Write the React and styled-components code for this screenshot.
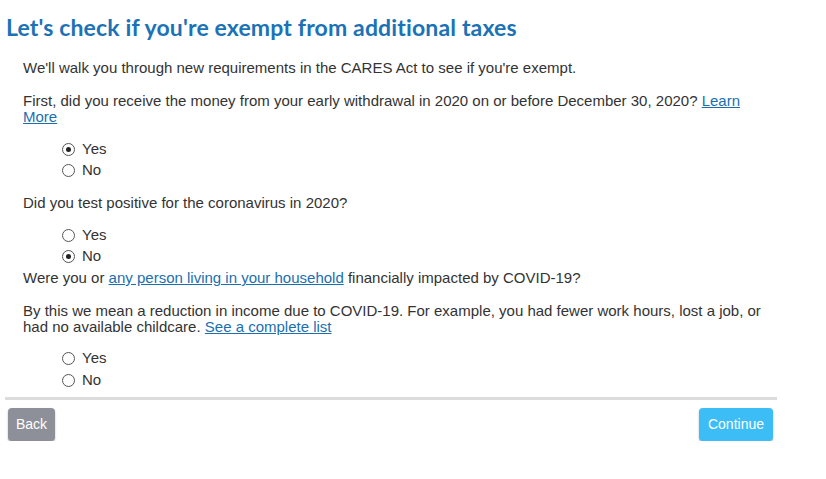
import React from "react";
import styled, { createGlobalStyle } from "styled-components";

const Global = createGlobalStyle`
  html, body { margin: 0; padding: 0; background: #fff; }
  body { font-family: "Liberation Sans", Arial, sans-serif; }
`;

const Page = styled.div`
  width: 772px;
  padding: 14px 0 0 5px;
`;

const Title = styled.h1`
  margin: 0 0 0 1px;
  font-family: Lato, "Open Sans", sans-serif;
  font-weight: 700;
  font-size: 23px;
  line-height: 27px;
  color: #1b72b6;
  letter-spacing: 0.15px;
`;

const Body = styled.div`
  padding: 19px 10px 0 18px;
  font-size: 15px;
  line-height: 16.5px;
  color: #333;
`;

const Para = styled.p`
  margin: 0 0 ${(p) => p.$mb ?? 16}px;
`;

const Link = styled.a`
  color: #1a6fb0;
  text-decoration: underline;
  cursor: pointer;
`;

const Group = styled.div`
  display: flex;
  flex-direction: column;
  padding-left: 39px;
  margin: ${(p) => p.$mt ?? 12}px 0 ${(p) => p.$mb ?? 14}px;
`;

const Row = styled.label`
  display: flex;
  align-items: center;
  height: ${(p) => p.$h ?? 21}px;
  gap: 7px;
`;

const Circle = styled.span`
  width: 11px;
  height: 11px;
  border: 1px solid #555;
  border-radius: 50%;
  display: flex;
  align-items: center;
  justify-content: center;
  box-sizing: content-box;
  background: #fff;
  &::after {
    content: "";
    width: 5px;
    height: 5px;
    border-radius: 50%;
    background: ${(p) => (p.$on ? "#222" : "transparent")};
  }
`;

const Divider = styled.hr`
  margin: 5px 0 0;
  border: 0;
  height: 3px;
  background: #dcdcdc;
`;

const Footer = styled.div`
  display: flex;
  justify-content: space-between;
  padding: 8px 4px 0 3px;
`;

const Button = styled.button`
  height: 33px;
  padding: 0 ${(p) => (p.$primary ? 9 : 8)}px;
  border: 0;
  border-radius: 4px;
  font-family: "Liberation Sans", Arial, sans-serif;
  font-size: 14px;
  color: #fff;
  background: ${(p) => (p.$primary ? "#3dbdf6" : "#8e9099")};
  box-shadow: 0 1px 2px rgba(0, 0, 0, 0.3);
  cursor: pointer;
`;

const Radio = ({ label, on, h }) => (
  <Row $h={h}>
    <Circle $on={on} />
    {label}
  </Row>
);

export default function App() {
  return (
    <>
      <Global />
      <Page>
        <Title>Let's check if you're exempt from additional taxes</Title>
        <Body>
          <Para>We'll walk you through new requirements in the CARES Act to see if you're exempt.</Para>
          <Para $mb={0}>
            First, did you receive the money from your early withdrawal in 2020 on or before December 30, 2020?{" "}
            <Link>Learn More</Link>
          </Para>
          <Group $mt={13} $mb={14}>
            <Radio label="Yes" on />
            <Radio label="No" />
          </Group>
          <Para $mb={0}>Did you test positive for the coronavirus in 2020?</Para>
          <Group $mt={14} $mb={3}>
            <Radio label="Yes" />
            <Radio label="No" on />
          </Group>
          <Para $mb={16}>
            Were you or <Link>any person living in your household</Link> financially impacted by COVID-19?
          </Para>
          <Para $mb={0}>
            By this we mean a reduction in income due to COVID-19. For example, you had fewer work hours, lost a job, or
            had no available childcare. <Link>See a complete list</Link>
          </Para>
          <Group $mt={12} $mb={0}>
            <Radio label="Yes" h={22} />
            <Radio label="No" h={22} />
          </Group>
        </Body>
        <Divider />
        <Footer>
          <Button>Back</Button>
          <Button $primary>Continue</Button>
        </Footer>
      </Page>
    </>
  );
}
